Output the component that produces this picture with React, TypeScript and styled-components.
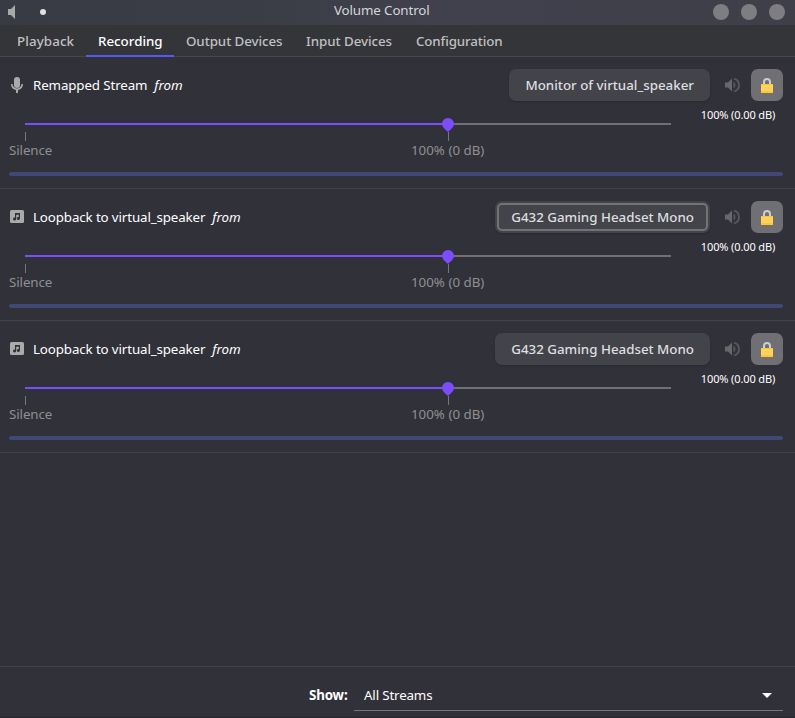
import React from "react";
import styled, { createGlobalStyle, css } from "styled-components";

const GlobalStyle = createGlobalStyle`
  * { box-sizing: border-box; }
  html, body { margin: 0; padding: 0; background: #313139; overflow: hidden; }
  body { font: 13.33px/18px "Noto Sans", "Open Sans", sans-serif; color: #fff; }
  button { font: inherit; border: 0; padding: 0; }
  svg { display: block; flex: none; }
`;

const Window = styled.div`
  width: 795px;
  height: 718px;
  display: flex;
  flex-direction: column;
  background: #313139;
  border-bottom: 2px solid #2c2b31;
`;

const TitleBar = styled.header`
  height: 25px;
  flex: none;
  display: grid;
  grid-template-columns: 334px auto 1fr;
  background: linear-gradient(90deg, #383b44 0%, #3a3c46 30%, #40414c 55%, #3f3f4a 100%);
`;

const TitleLeft = styled.div`
  display: flex;
  align-items: center;
  gap: 22px;
  padding: 0 0 1px 8px;
`;

const StickyDot = styled.span`
  width: 6px;
  height: 6px;
  border-radius: 50%;
  background: #e0e0e2;
`;

const Title = styled.h1`
  margin: 0;
  font-size: 13.33px;
  line-height: 20px;
  font-weight: 400;
  letter-spacing: -0.12px;
  color: #d5d5d8;
`;

const WindowControls = styled.div`
  display: flex;
  justify-content: flex-end;
  align-items: center;
  gap: 12px;
  padding: 0 10px 1px 0;
`;

const ControlDot = styled.button`
  width: 16px;
  height: 16px;
  border-radius: 50%;
  background: #7e7e82;
`;

const Tabs = styled.nav`
  height: 32px;
  flex: none;
  display: flex;
  padding-left: 5px;
  background: #343539;
  box-shadow: inset 0 -1px #46464b;
`;

const Tab = styled.button<{ $active?: boolean; $width: number; $tracking: number }>`
  width: ${(p) => p.$width}px;
  height: 32px;
  padding: 0 0 0 12px;
  text-align: left;
  white-space: nowrap;
  letter-spacing: ${(p) => p.$tracking}px;
  background: none;
  font-weight: 500;
  color: ${(p) => (p.$active ? "#fff" : "#c0c0c2")};
  ${(p) => p.$active && css`box-shadow: inset 0 -2px #5657f5;`}
`;

const Streams = styled.main`
  flex: 1;
  min-height: 0;
`;

const Stream = styled.section`
  height: 132px;
  padding: 12px 12px 0 9px;
  border-bottom: 1px solid #424249;
`;

const StreamHeader = styled.div`
  display: flex;
  align-items: center;
  height: 32px;
`;

const StreamIcon = styled.span`
  width: 16px;
  margin-right: 8px;
`;

const StreamName = styled.span`
  flex: 1;
  white-space: pre;
  letter-spacing: -0.12px;

  i {
    letter-spacing: 0;
  }
`;

const DeviceButton = styled.button<{ $focused?: boolean }>`
  height: 32px;
  padding: 0 16px;
  border-radius: 7px;
  background: #434449;
  color: #dedee0;
  font-weight: 500;
  box-shadow: 0 1px 2px rgba(0, 0, 0, 0.18);
  ${(p) => p.$focused && css`
    outline: 2px solid #737377;
    outline-offset: -4px;
  `}
`;

const MuteButton = styled.button`
  width: 16px;
  margin: 0 11px 0 14px;
  background: none;
`;

const LockButton = styled.button`
  width: 32px;
  height: 32px;
  border-radius: 7px;
  background: #6f6f74;
  display: grid;
  place-items: center;
`;

const ScaleRow = styled.div`
  display: flex;
  justify-content: space-between;
  height: 71px;
`;

const Scale = styled.div`
  width: 646px;
  margin: 22px 0 0 16px;
`;

const Track = styled.div`
  position: relative;
  height: 2px;
  background: #6f6f74;
`;

const Fill = styled.div`
  width: 423px;
  height: 2px;
  background: #7c4dff;
`;

const Knob = styled.svg`
  position: absolute;
  left: 417px;
  top: -5px;
  z-index: 1;
`;

const Tick = styled.span<{ $x: number }>`
  position: absolute;
  left: ${(p) => p.$x}px;
  top: 9px;
  width: 1px;
  height: 9px;
  background: #77777b;
`;

const MarkLabels = styled.div`
  display: flex;
  gap: 360px;
  margin: 16px 0 0 -16px;
  white-space: nowrap;
  color: #8f8f93;
`;

const MarkLabel = styled.span<{ $tracking?: number }>`
  width: 42px;
  letter-spacing: ${(p) => p.$tracking ?? 0}px;
`;

const Level = styled.div`
  width: 90px;
  padding-top: 6px;
  text-align: center;
  font-size: 11px;
  line-height: 16px;
  letter-spacing: -0.12px;
`;

const Meter = styled.div`
  height: 4px;
  border-radius: 2px;
  background: #404876;
`;

const Footer = styled.footer`
  height: 50px;
  flex: none;
  display: flex;
  align-items: flex-start;
  padding: 12px 12px 0 309px;
  border-top: 1px solid #424249;
`;

const ShowLabel = styled.label`
  width: 45px;
  line-height: 32px;
  font-weight: 700;
  letter-spacing: -0.15px;
`;

const Select = styled.button`
  flex: 1;
  height: 32px;
  padding: 0 11px 0 10px;
  display: flex;
  align-items: center;
  justify-content: space-between;
  background: none;
  color: #fff;
  letter-spacing: -0.15px;
  border-bottom: 1px solid #77777b;

  svg {
    margin-top: 2px;
  }
`;

const TitleSpeaker = () => (
  <svg width="10" height="14" viewBox="0 0 10 14">
    <path d="M0 4h3l4-4v14l-4-4H0z" fill="#a9a9aa" />
  </svg>
);

const Mic = () => (
  <svg width="16" height="16" viewBox="0 0 16 16" fill="#aaa">
    <rect x="5" y="0" width="6" height="11" rx="3" />
    <path d="M2 7h1.6a4.4 4.4 0 0 0 8.8 0H14a6 6 0 0 1-5 5.9V16H7v-3.1A6 6 0 0 1 2 7z" />
  </svg>
);

const Music = () => (
  <svg width="16" height="16" viewBox="0 0 16 16">
    <rect x="1" y="1" width="14" height="13" rx="1.5" fill="#aaa" />
    <path d="M6 4h5v5.6a1.6 1.5 0 1 1-1.2-1.5V5.8H7.2v4.3A1.6 1.5 0 1 1 6 8.6z" fill="#313139" />
  </svg>
);

const Speaker = () => (
  <svg width="16" height="16" viewBox="0 0 16 16">
    <path d="M1 5.5h3l4-4v13l-4-4H1z" fill="#68686c" />
    <path d="M9.5 4.5a4 4 0 0 1 0 7z" fill="#57575c" />
    <path d="M10 1.6a6.6 6.6 0 0 1 0 12.8" fill="none" stroke="#57575c" strokeWidth="1.9" />
  </svg>
);

const Lock = () => (
  <svg width="12" height="16" viewBox="0 0 12 16">
    <path d="M3 8V5a3 3 0 0 1 6 0V8" fill="none" stroke="#cececf" strokeWidth="2" />
    <rect x="0" y="7" width="12" height="9" rx=".5" fill="#ffd35c" />
    <path d="M0 7h12v1H0zM0 14h12v2H0z" fill="#ffc72d" />
  </svg>
);

interface StreamProps {
  icon: React.ReactNode;
  name: string;
  device: string;
  focused?: boolean;
}

const StreamRow = ({ icon, name, device, focused }: StreamProps) => (
  <Stream>
    <StreamHeader>
      <StreamIcon>{icon}</StreamIcon>
      <StreamName>{name} <i> from</i></StreamName>
      <DeviceButton $focused={focused}>{device}</DeviceButton>
      <MuteButton aria-label="Mute"><Speaker /></MuteButton>
      <LockButton aria-label="Lock channels"><Lock /></LockButton>
    </StreamHeader>
    <ScaleRow>
      <Scale>
        <Track>
          <Fill />
          <Knob width="12" height="14" viewBox="0 0 12 14">
            <path d="M6 0a6 6 0 0 1 6 6c0 3-3 5-6 8-3-3-6-5-6-8a6 6 0 0 1 6-6z" fill="#7c4dff" />
          </Knob>
          <Tick $x={0} />
          <Tick $x={423} />
        </Track>
        <MarkLabels>
          <MarkLabel $tracking={-0.1}>Silence</MarkLabel>
          <MarkLabel>100% (0 dB)</MarkLabel>
        </MarkLabels>
      </Scale>
      <Level>100% (0.00 dB)</Level>
    </ScaleRow>
    <Meter />
  </Stream>
);

const tabs = [
  { label: "Playback", width: 81, tracking: 0.1 },
  { label: "Recording", width: 88, tracking: 0 },
  { label: "Output Devices", width: 120, tracking: -0.08 },
  { label: "Input Devices", width: 110, tracking: -0.05 },
  { label: "Configuration", width: 110, tracking: -0.13 },
];

export default function App() {
  return (
    <>
      <GlobalStyle />
      <Window>
        <TitleBar>
          <TitleLeft><TitleSpeaker /><StickyDot /></TitleLeft>
          <Title>Volume Control</Title>
          <WindowControls>
            <ControlDot aria-label="Minimize" />
            <ControlDot aria-label="Maximize" />
            <ControlDot aria-label="Close" />
          </WindowControls>
        </TitleBar>
        <Tabs>
          {tabs.map(({ label, width, tracking }) => (
            <Tab key={label} $width={width} $tracking={tracking} $active={label === "Recording"}>
              {label}
            </Tab>
          ))}
        </Tabs>
        <Streams>
          <StreamRow icon={<Mic />} name="Remapped Stream" device="Monitor of virtual_speaker" />
          <StreamRow icon={<Music />} name="Loopback to virtual_speaker" device="G432 Gaming Headset Mono" focused />
          <StreamRow icon={<Music />} name="Loopback to virtual_speaker" device="G432 Gaming Headset Mono" />
        </Streams>
        <Footer>
          <ShowLabel>Show:</ShowLabel>
          <Select>
            <span>All Streams</span>
            <svg width="10" height="5" viewBox="0 0 10 5"><path d="M0 0h10L5 5z" fill="#fff" /></svg>
          </Select>
        </Footer>
      </Window>
    </>
  );
}
